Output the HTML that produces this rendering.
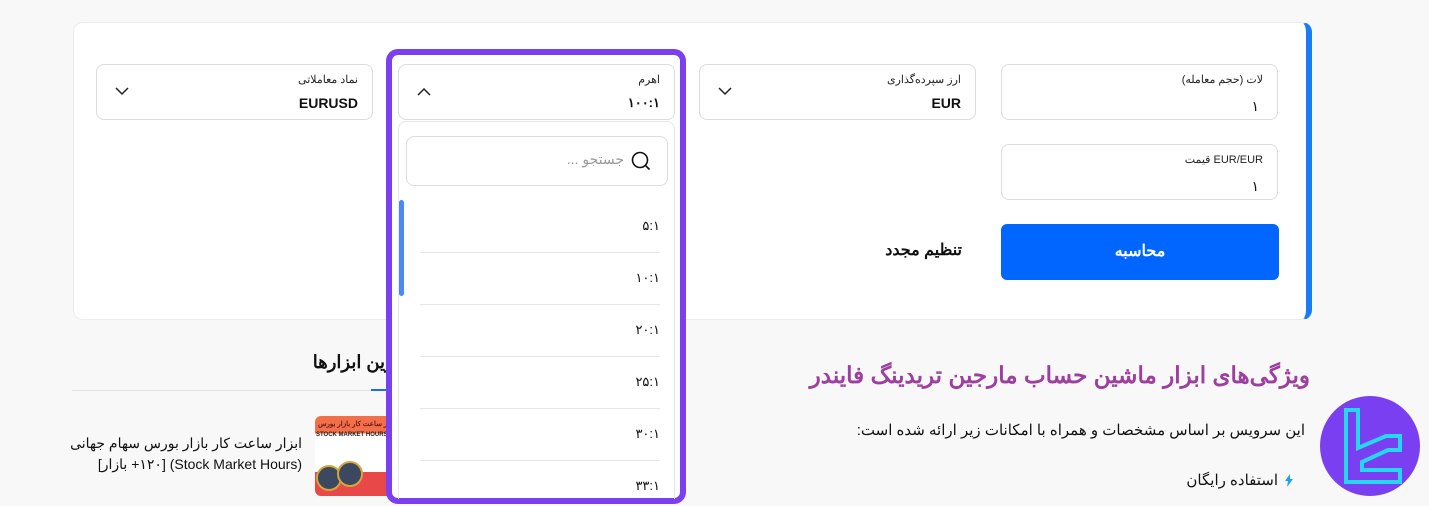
<!DOCTYPE html>
<html><head><meta charset="utf-8"><style>
*{box-sizing:border-box;margin:0;padding:0}
body{width:1429px;height:506px;background:#f8f8f9;font-family:"Liberation Sans","Noto Sans CJK SC",sans-serif;position:relative;overflow:hidden;color:#111}
.abs{position:absolute}
.card{left:73px;top:22px;width:1239px;height:298px;background:#fff;border-radius:10px;border:1px solid #ececec;border-right:6px solid #1a7cf5}
.field{position:absolute;width:277px;height:56px;border:1px solid #dcdcdc;border-radius:8px;background:#fff;direction:rtl}
.field .lb{position:absolute;right:14px;top:8px;font-size:11px;color:#222}
.field .v{position:absolute;right:14px;top:30px;font-size:14px;color:#111;font-weight:bold}
.chev{position:absolute;left:18px;top:22px}
.opt{position:absolute;left:420px;width:240px;direction:rtl;font-size:13px;text-align:right;padding-right:0}
.div{position:absolute;left:420px;width:240px;height:1px;background:#e6e6e6}
</style></head><body>
<div class="abs card"></div>

<div class="field" style="left:1001px;top:64px"><span class="lb">لات (حجم معامله)</span><span class="v" style="right:18px;top:33px;font-weight:normal">۱</span></div>
<div class="field" style="left:1001px;top:144px"><span class="lb">EUR/EUR قیمت</span><span class="v" style="right:18px;top:33px;font-weight:normal">۱</span></div>
<div class="abs" style="left:1001px;top:224px;width:278px;height:56px;background:#0066ff;border-radius:6px;color:#fff;font-size:16px;font-weight:bold;text-align:center;line-height:56px">محاسبه</div>
<div class="abs" style="left:860px;top:240px;width:102px;text-align:right;font-size:16px;font-weight:bold;direction:rtl">تنظیم مجدد</div>

<div class="field" style="left:699px;top:64px"><span class="lb">ارز سپرده‌گذاری</span><span class="v">EUR</span>
<svg class="chev" width="14" height="9" viewBox="0 0 14 9"><path d="M1 1l6 6 6-6" fill="none" stroke="#222" stroke-width="1.5"/></svg></div>
<div class="field" style="left:96px;top:64px"><span class="lb">نماد معاملاتی</span><span class="v">EURUSD</span>
<svg class="chev" width="14" height="9" viewBox="0 0 14 9"><path d="M1 1l6 6 6-6" fill="none" stroke="#222" stroke-width="1.5"/></svg></div>

<!-- bottom left -->
<div class="abs" style="left:290px;top:352px;width:110px;font-size:18px;font-weight:bold;direction:rtl;text-align:right;white-space:nowrap">ترین ابزارها</div>
<div class="abs" style="left:72px;top:390px;width:326px;height:1px;background:#e3e3e3"></div>
<div class="abs" style="left:371px;top:389px;width:27px;height:2px;background:#1a6cf0"></div>
<div class="abs" style="left:315px;top:416px;width:83px;height:80px;border-radius:6px;background:linear-gradient(#f36f4a 0 22%,#fff 22% 70%,#e94848 70%)"></div>
<div class="abs" style="left:317px;top:420px;width:80px;font-size:7px;color:#6a1b1b;font-weight:bold;white-space:nowrap;overflow:hidden;direction:rtl">ابزار ساعت کار بازار بورس سهام جهانی</div>
<div class="abs" style="left:316px;top:432px;font-size:6px;color:#222;white-space:nowrap;font-weight:bold">STOCK MARKET HOURS</div>
<div class="abs" style="left:316px;top:465px;width:26px;height:26px;border-radius:50%;background:#3b4860;border:2px solid #d4a53a"></div>
<div class="abs" style="left:337px;top:461px;width:26px;height:26px;border-radius:50%;background:#3b4860;border:2px solid #d4a53a"></div>
<div class="abs" style="left:40px;top:433px;width:262px;font-size:14px;line-height:21px;direction:rtl;text-align:right;white-space:nowrap">ابزار ساعت کار بازار بورس سهام جهانی<br>(Stock Market Hours) [۱۲۰+ بازار]</div>

<!-- bottom right -->
<div class="abs" style="left:740px;top:362px;width:570px;font-size:23px;font-weight:bold;color:#9c3f9e;direction:rtl;text-align:right;white-space:nowrap">ویژگی‌های ابزار ماشین حساب مارجین تریدینگ فایندر</div>
<div class="abs" style="left:1320px;top:396px;width:100px;height:100px;border-radius:50%;background:#7b3ff2"></div>
<svg class="abs" style="left:1340px;top:408px" width="70" height="76" viewBox="0 0 70 76"><path d="M6 2h12v38l28-12h14v14h-12l-26 12v8h38v12H6z" fill="none" stroke="#25d8f0" stroke-width="4"/></svg>
<div class="abs" style="left:700px;top:421px;width:605px;font-size:15px;direction:rtl;text-align:right">این سرویس بر اساس مشخصات و همراه با امکانات زیر ارائه شده است:</div>
<div class="abs" style="left:1090px;top:471px;width:188px;font-size:15px;direction:rtl;text-align:right">استفاده رایگان</div>
<svg class="abs" style="left:1285px;top:474px" width="8" height="13" viewBox="0 0 8 13"><path d="M5 0L0 7h3l-1 6 6-8H5z" fill="#1aa3f0"/></svg>

<!-- dropdown -->
<div class="abs" style="left:386px;top:49px;width:300px;height:455px;border:6px solid #7b3ff2;border-radius:12px;background:#fff"></div>
<div class="field" style="left:398px;top:64px"><span class="lb">اهرم</span><span class="v" style="font-size:13px">۱۰۰:۱</span>
<svg class="chev" width="14" height="9" viewBox="0 0 14 9"><path d="M1 8l6-6 6 6" fill="none" stroke="#222" stroke-width="1.5"/></svg></div>
<div class="abs" style="left:398px;top:121px;width:277px;height:378px;border:1px solid #e6e6e6;border-bottom:none;border-radius:8px 8px 0 0"></div>
<div class="abs" style="left:406px;top:136px;width:262px;height:50px;border:1px solid #dcdcdc;border-radius:8px"></div>
<svg class="abs" style="left:631px;top:151px" width="20" height="20" viewBox="0 0 20 20"><circle cx="9" cy="9" r="7.5" fill="none" stroke="#111" stroke-width="1.6"/><path d="M14.5 14.5l4 4" stroke="#111" stroke-width="1.6"/></svg>
<div class="abs" style="left:540px;top:151px;width:84px;font-size:14px;color:#999;direction:rtl;text-align:right">جستجو ...</div>
<div class="abs" style="left:399px;top:200px;width:5px;height:96px;background:#4a8af2;border-radius:3px"></div>
<div class="opt" style="top:218px">۵:۱</div>
<div class="div" style="top:252px"></div>
<div class="opt" style="top:270px">۱۰:۱</div>
<div class="div" style="top:304px"></div>
<div class="opt" style="top:322px">۲۰:۱</div>
<div class="div" style="top:356px"></div>
<div class="opt" style="top:374px">۲۵:۱</div>
<div class="div" style="top:408px"></div>
<div class="opt" style="top:426px">۳۰:۱</div>
<div class="div" style="top:460px"></div>
<div class="opt" style="top:478px">۳۳:۱</div>
</body></html>
